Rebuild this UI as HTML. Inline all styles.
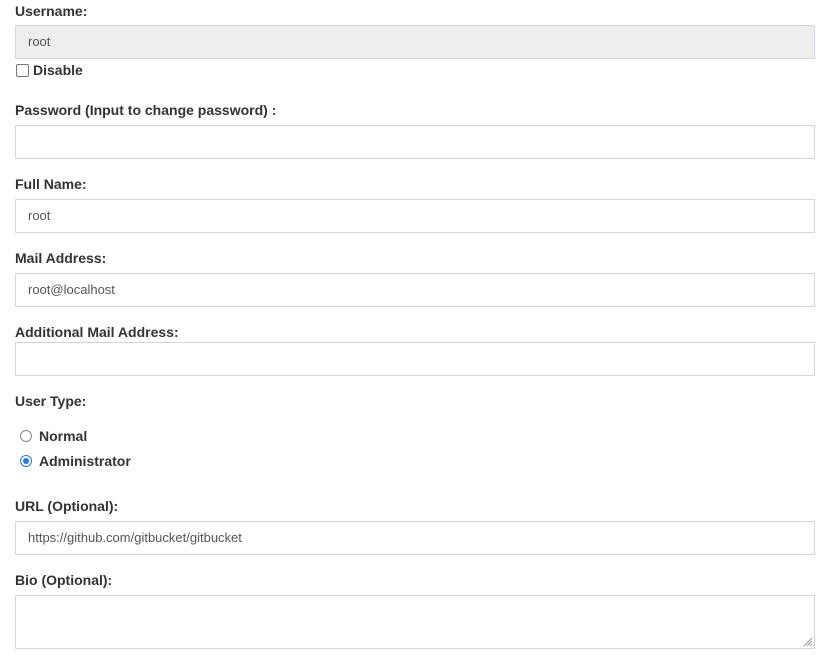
<!DOCTYPE html>
<html><head><meta charset="utf-8"><style>
html,body{margin:0;padding:0;width:830px;height:664px;background:#fff;overflow:hidden}
body{font-family:"Liberation Sans",sans-serif;color:#333;position:relative}
.l{position:absolute;left:15px;font-weight:bold;font-size:14px;line-height:16px}
.i{position:absolute;left:15px;width:798px;height:32px;border:1px solid #d2d6de;background:#fff;font-size:13px;color:#555;line-height:32px;text-indent:12px}
.cb{position:absolute;left:16px;top:64px;width:11px;height:11px;border:1px solid #767676;border-radius:2px;background:#fff}
.r{position:absolute;left:20px;width:10px;height:10px;border:1.5px solid #888;border-radius:50%;background:#fff}
.r.on{border-color:#2a78d6}
.r.on::after{content:"";position:absolute;left:2px;top:2px;width:6px;height:6px;border-radius:50%;background:#2a78d6}
</style></head><body>
<div class="l" style="top:3px">Username:</div>
<div class="i" style="top:25px;background:#eee">root</div>
<div class="cb"></div>
<div class="l" style="top:62px;left:33px">Disable</div>
<div class="l" style="top:102px">Password (Input to change password) :</div>
<div class="i" style="top:125px"></div>
<div class="l" style="top:176px">Full Name:</div>
<div class="i" style="top:199px">root</div>
<div class="l" style="top:250px">Mail Address:</div>
<div class="i" style="top:273px">root@localhost</div>
<div class="l" style="top:324px">Additional Mail Address:</div>
<div class="i" style="top:342px"></div>
<div class="l" style="top:393px">User Type:</div>
<div class="r" style="top:430px"></div>
<div class="l" style="top:428px;left:39px">Normal</div>
<div class="r on" style="top:455px"></div>
<div class="l" style="top:453px;left:39px">Administrator</div>
<div class="l" style="top:498px">URL (Optional):</div>
<div class="i" style="top:521px">https://github.com/gitbucket/gitbucket</div>
<div class="l" style="top:572px">Bio (Optional):</div>
<div class="i" style="top:595px;height:52px"></div>
<svg style="position:absolute;left:803px;top:637px" width="10" height="10"><path d="M9 1L1 9M9 4L4 9M9 7L7 9" stroke="#999" stroke-width="1"/></svg>
</body></html>
